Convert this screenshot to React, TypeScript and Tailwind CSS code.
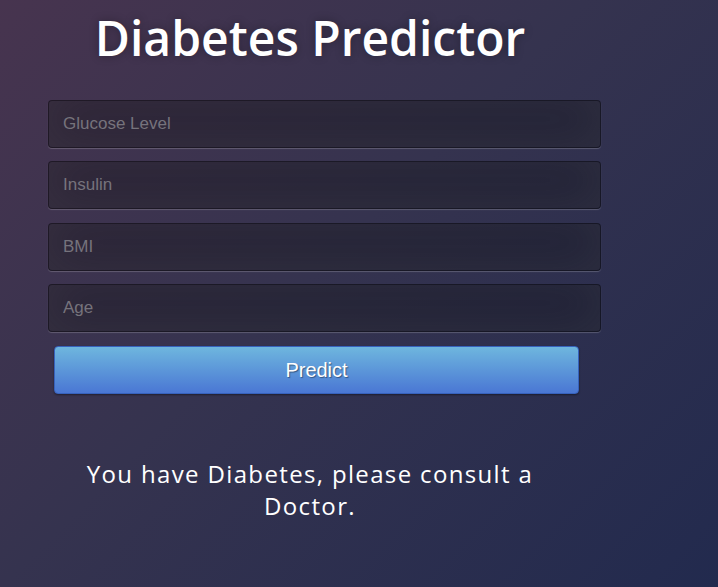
export default function App() {
  const fields = ["Glucose Level", "Insulin", "BMI", "Age"];

  return (
    <div className="min-h-[587px] w-full bg-[linear-gradient(135deg,#47344f_0%,#35334f_45%,#222a4e_100%)] font-['Liberation_Sans',Arial,sans-serif]">
      <div className="w-[620px] pt-[6px]">
        <h1 className="text-center font-['Open_Sans',sans-serif] text-[48px] font-semibold leading-[64px] text-white [text-shadow:0_0_10px_rgba(0,0,0,0.3)]">
          Diabetes Predictor
        </h1>

        <form className="mt-[30px] flex flex-col">
          {fields.map((f) => (
            <input
              key={f}
              type="text"
              placeholder={f}
              className="mb-[13.4px] ml-[48px] h-[48px] w-[553px] rounded-[4px] border border-black/30 bg-black/30 px-[14px] text-[17px] text-white outline-none placeholder:text-[#76737c] shadow-[inset_0_-5px_45px_rgba(100,100,100,0.2),0_1px_1px_rgba(255,255,255,0.2)]"
            />
          ))}
          <button
            type="button"
            className="ml-[54px] h-[48px] w-[525px] rounded-[4px] border border-[#3762bc] bg-[linear-gradient(to_bottom,#6eb6de,#4a77d4)] text-[20px] text-white [text-shadow:1px_1px_1px_rgba(0,0,0,0.4)] shadow-[0_1px_2px_rgba(0,0,0,0.4)]"
          >
            Predict
          </button>
        </form>

        <p className="mx-auto mt-[64px] w-[500px] text-center font-['Open_Sans',sans-serif] text-[24px] leading-[32px] tracking-[1.35px] text-white">
          You have Diabetes, please consult a Doctor.
        </p>
      </div>
    </div>
  );
}
